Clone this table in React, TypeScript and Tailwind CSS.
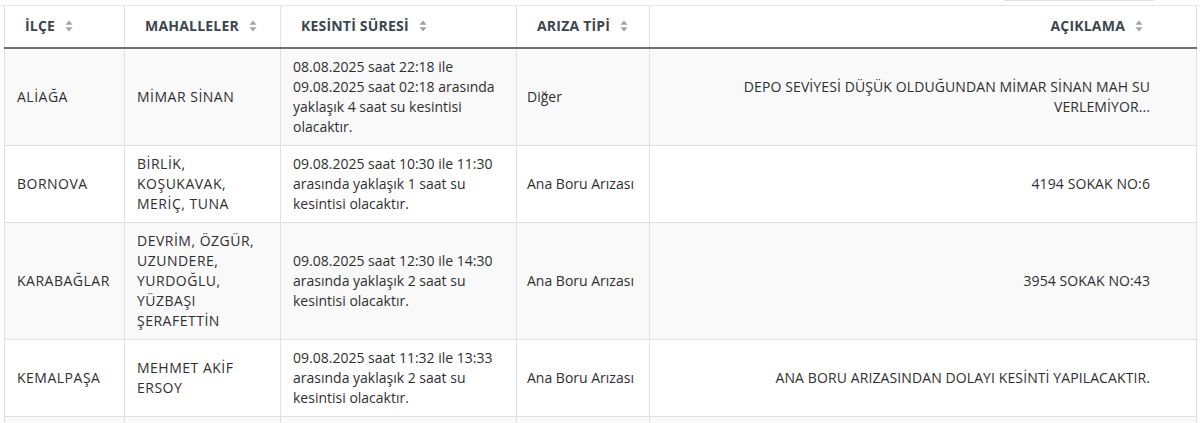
import React from "react";

type Row = {
  ilce: string;
  mahalle: string;
  sure: string;
  tip: string;
  aciklama: string;
};

const rows: Row[] = [
  {
    ilce: "ALİAĞA",
    mahalle: "MİMAR SİNAN",
    sure: "08.08.2025 saat 22:18 ile 09.08.2025 saat 02:18 arasında yaklaşık 4 saat su kesintisi olacaktır.",
    tip: "Diğer",
    aciklama: "DEPO SEVİYESİ DÜŞÜK OLDUĞUNDAN MİMAR SİNAN MAH SU VERLEMİYOR...",
  },
  {
    ilce: "BORNOVA",
    mahalle: "BİRLİK, KOŞUKAVAK, MERİÇ, TUNA",
    sure: "09.08.2025 saat 10:30 ile 11:30 arasında yaklaşık 1 saat su kesintisi olacaktır.",
    tip: "Ana Boru Arızası",
    aciklama: "4194 SOKAK NO:6",
  },
  {
    ilce: "KARABAĞLAR",
    mahalle: "DEVRİM, ÖZGÜR, UZUNDERE, YURDOĞLU, YÜZBAŞI ŞERAFETTİN",
    sure: "09.08.2025 saat 12:30 ile 14:30 arasında yaklaşık 2 saat su kesintisi olacaktır.",
    tip: "Ana Boru Arızası",
    aciklama: "3954 SOKAK NO:43",
  },
  {
    ilce: "KEMALPAŞA",
    mahalle: "MEHMET AKİF ERSOY",
    sure: "09.08.2025 saat 11:32 ile 13:33 arasında yaklaşık 2 saat su kesintisi olacaktır.",
    tip: "Ana Boru Arızası",
    aciklama: "ANA BORU ARIZASINDAN DOLAYI KESİNTİ YAPILACAKTIR.",
  },
  {
    ilce: "",
    mahalle: "",
    sure: "",
    tip: "",
    aciklama: "",
  },
];

function SortIcon() {
  return (
    <svg width="8" height="12" viewBox="0 0 8 12" className="inline-block ml-[10px] -mt-[3px] align-middle">
      <path d="M4 0.5 L7.5 4.8 H0.5 Z" fill="#9ea3a8" />
      <path d="M4 11.5 L7.5 7.2 H0.5 Z" fill="#9ea3a8" />
    </svg>
  );
}

export default function App() {
  const th = "px-5 pt-[10px] pb-[11px] border-x border-[#dee2e6] border-b-2 border-b-[#6f6f6f] text-left font-bold text-[14px] leading-5 text-[#3b4650] tracking-[0.2px] whitespace-nowrap";
  const td = "px-3 py-2 border border-[#dee2e6] align-middle text-[#2f2f2f] leading-5";

  return (
    <div className="bg-white w-[1200px] h-[423px] overflow-hidden" style={{ fontFamily: '"Open Sans", "Noto Sans", sans-serif' }}>
      <div className="flex justify-end pr-[46px] h-[5px]">
        <div className="w-[150px] h-px border-x border-b border-[#dee2e6]" />
      </div>
      <div className="border-t border-[#e3e6e9] pl-1 pr-[3px]">
        <table className="table-fixed border-collapse w-full text-[14px]">
          <colgroup>
            <col className="w-[120px]" />
            <col className="w-[156px]" />
            <col className="w-[236px]" />
            <col className="w-[133px]" />
            <col />
          </colgroup>
          <thead>
            <tr>
              <th className={th}>İLÇE<SortIcon /></th>
              <th className={th}>MAHALLELER<SortIcon /></th>
              <th className={th}>KESİNTİ SÜRESİ<SortIcon /></th>
              <th className={th}>ARIZA TİPİ<SortIcon /></th>
              <th className={th + " text-right pr-[53px]"}>AÇIKLAMA<SortIcon /></th>
            </tr>
          </thead>
          <tbody>
            {rows.map((r, i) => (
              <tr key={i} className={i % 2 === 0 ? "bg-[#f9f9fa]" : "bg-white"}>
                <td className={td + " tracking-[0.5px]"}>{r.ilce}</td>
                <td className={td + " tracking-[0.5px]"}>{r.mahalle}</td>
                <td className={td}>{r.sure}</td>
                <td className={td + " pl-[10px]"}>{r.tip}</td>
                <td className={td + " text-right pr-[46px] tracking-[0.1px]"}>
                  <div className="ml-auto max-w-[420px]">{r.aciklama}</div>
                </td>
              </tr>
            ))}
          </tbody>
        </table>
      </div>
    </div>
  );
}
